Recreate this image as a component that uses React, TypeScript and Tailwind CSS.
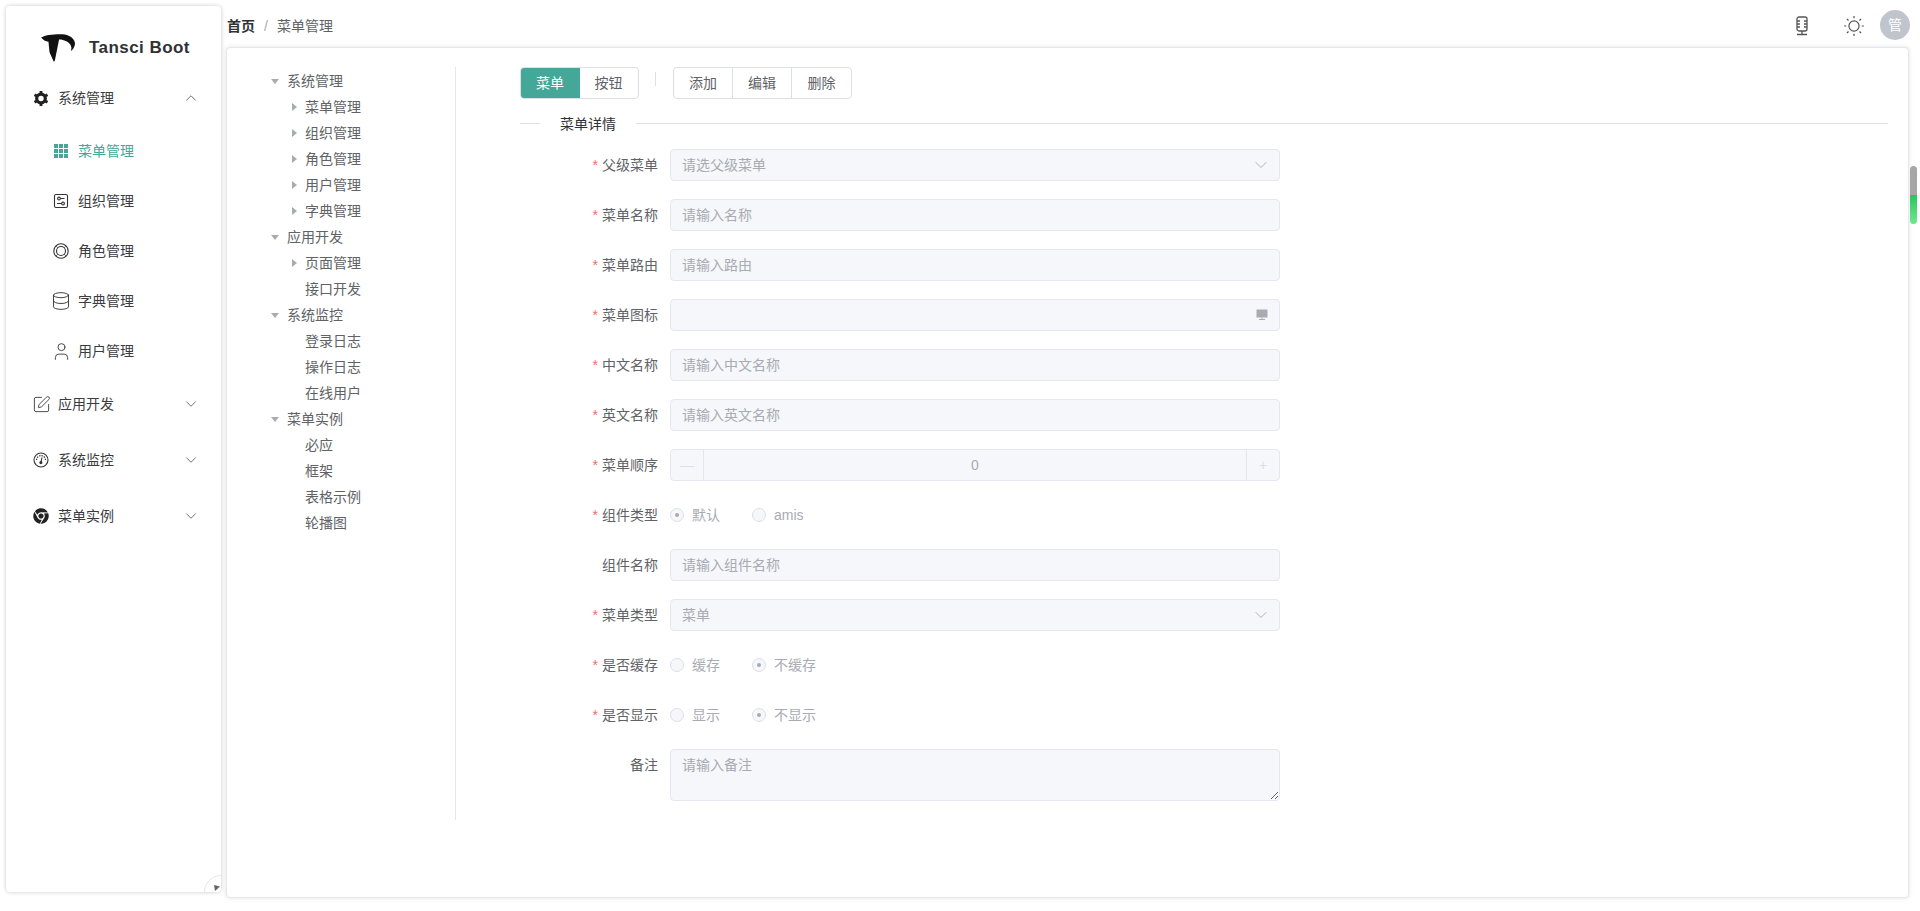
import type { ReactNode } from 'react';
import { ChevronDown, ChevronUp, Database, SquarePen, User } from 'lucide-react';
import { FaChrome } from 'react-icons/fa';

const subMenus = ['菜单管理', '组织管理', '角色管理', '字典管理', '用户管理'];

type TreeRow = { label: string; level: 1 | 2; arrow?: boolean };

const treeRows: TreeRow[] = [
  { label: '系统管理', level: 1, arrow: true },
  { label: '菜单管理', level: 2, arrow: true },
  { label: '组织管理', level: 2, arrow: true },
  { label: '角色管理', level: 2, arrow: true },
  { label: '用户管理', level: 2, arrow: true },
  { label: '字典管理', level: 2, arrow: true },
  { label: '应用开发', level: 1, arrow: true },
  { label: '页面管理', level: 2, arrow: true },
  { label: '接口开发', level: 2 },
  { label: '系统监控', level: 1, arrow: true },
  { label: '登录日志', level: 2 },
  { label: '操作日志', level: 2 },
  { label: '在线用户', level: 2 },
  { label: '菜单实例', level: 1, arrow: true },
  { label: '必应', level: 2 },
  { label: '框架', level: 2 },
  { label: '表格示例', level: 2 },
  { label: '轮播图', level: 2 },
];

function GearIcon() {
  return (
    <svg width="17" height="17" viewBox="0 0 17 17" fill="none" stroke="#222">
      <circle cx="8.500" cy="8.500" r="4.600" strokeWidth="3.400" />
      <path d="M8.500 0.500v3M8.500 13.500v3M1.600 4.500l2.600 1.500M12.800 11l2.600 1.500M1.600 12.500l2.600-1.500M12.800 6l2.600-1.500" strokeWidth="3" />
    </svg>
  );
}

function GridIcon() {
  return (
    <svg width="14" height="14" viewBox="0 0 14 14" fill="#45a797">
      {[0, 5, 10].map(y =>
        [0, 5, 10].map(x => <rect key={`${x}-${y}`} x={x} y={y} width="4" height="4" />),
      )}
    </svg>
  );
}

function SlidersIcon() {
  return (
    <svg width="16" height="16" viewBox="0 0 16 16" fill="none" stroke="#333" strokeWidth="1.100">
      <rect x="1.500" y="1.500" width="13" height="13" rx="1.500" />
      <circle cx="6" cy="5.500" r="1.400" />
      <path d="M7.500 5.500h4M4 10.500h4.500" />
      <circle cx="10" cy="10.500" r="1.400" />
    </svg>
  );
}

function RingIcon() {
  return (
    <svg width="16" height="16" viewBox="0 0 16 16" fill="none" stroke="#333" strokeWidth="1.100">
      <circle cx="8" cy="8" r="7.200" />
      <circle cx="8" cy="8" r="4.500" />
      <path d="M3 3l1.800 1.800M13 3l-1.800 1.800M3 13l1.800-1.800M13 13l-1.800-1.800" strokeWidth="0.700" />
    </svg>
  );
}

function GaugeIcon() {
  return (
    <svg width="16" height="16" viewBox="0 0 16 16" fill="none" stroke="#333" strokeWidth="1.100">
      <circle cx="8" cy="8" r="7" />
      <path d="M3.600 8a4.400 4.400 0 0 1 8.800 0" strokeDasharray="1.400 1" />
      <path d="M9 5.500 8 10" />
      <circle cx="7.900" cy="10.600" r="1" fill="#333" />
    </svg>
  );
}

function MicIcon() {
  return (
    <svg width="14" height="20" viewBox="0 0 14 20" fill="none" stroke="#555" strokeWidth="1.300">
      <rect x="2" y="1" width="10" height="14" rx="2" />
      <path d="M2 5h3M9 5h3M2 8h3M9 8h3M2 11h3M9 11h3M7 15v3M2 18.500h10" />
    </svg>
  );
}

function SunIcon() {
  return (
    <svg className="-mx-px" width="22" height="22" viewBox="0 0 20 20" fill="none" stroke="#555" strokeWidth="1.100">
      <circle cx="10" cy="10" r="4.600" />
      <path d="M10 1v2M10 17v2M1 10h2M17 10h2M3.600 3.600 5 5M15 15l1.400 1.400M3.600 16.400 5 15M15 5l1.400-1.400" />
    </svg>
  );
}

function Logo() {
  return (
    <svg width="36" height="30" viewBox="5 6 34 28">
      <path d="M6 10C12 7 20 7 26 7c7 0 13 5 12 10-1 3-2 5-4 6 2-4 0-9-9-11h-2l-4 20-1 1-4-9-1-10c-3 0-5-2-7-4z" fill="#111" />
    </svg>
  );
}

function MenuGroup({ icon, label, open }: { icon: ReactNode; label: string; open?: boolean }) {
  return (
    <div className="flex h-14 items-center pl-[27px] pr-[21px] text-sm text-[#3a3c40]">
      <span className="flex w-4 justify-center">{icon}</span>
      <span className="ml-[9px] flex-1">{label}</span>
      {open ? (
        <ChevronUp size={18} strokeWidth={1.100} color="#555" />
      ) : (
        <ChevronDown size={18} strokeWidth={1.100} color="#555" />
      )}
    </div>
  );
}

function SubMenu({ icon, label, active }: { icon: ReactNode; label: string; active?: boolean }) {
  return (
    <div className={`flex h-[50px] items-center pl-[47px] text-sm ${active ? 'text-[#45a797]' : 'text-[#3a3c40]'}`}>
      <span className="flex w-4 justify-center">{icon}</span>
      <span className="ml-[9px]">{label}</span>
    </div>
  );
}

function Sidebar() {
  const icons = [
    <GridIcon />,
    <SlidersIcon />,
    <RingIcon />,
    <Database className="shrink-0" size={20} strokeWidth={1.100} color="#333" />,
    <User className="shrink-0" size={21} strokeWidth={1} color="#333" />,
  ];
  return (
    <aside className="relative ml-[6px] mt-[6px] h-[886px] w-[215px] shrink-0 overflow-hidden rounded bg-white shadow-[0_0_4px_rgba(0,0,0,0.22)]">
      <div className="flex h-[64px] items-center pl-[34px] pt-[20px]">
        <Logo />
        <span className="ml-[13px] text-[17px] font-bold tracking-[0.45px] text-[#303133]">Tansci Boot</span>
      </div>
      <MenuGroup icon={<GearIcon />} label="系统管理" open />
      {subMenus.map((label, i) => (
        <SubMenu key={label} icon={icons[i]} label={label} active={i === 0} />
      ))}
      <MenuGroup icon={<SquarePen className="shrink-0" size={19} strokeWidth={1.100} color="#333" />} label="应用开发" />
      <MenuGroup icon={<GaugeIcon />} label="系统监控" />
      <MenuGroup icon={<FaChrome size={16} color="#222" />} label="菜单实例" />
      <div className="absolute -bottom-[17px] -right-[17px] h-[34px] w-[34px] rounded-full border border-[#e4e7ed] bg-white" />
      <svg className="absolute bottom-px right-px" width="6" height="6" viewBox="0 0 6 6" fill="#666">
        <path d="M0 0l6 1.500L1 6z" />
      </svg>
    </aside>
  );
}

function Tree() {
  return (
    <div className="w-[229px] shrink-0 border-r border-[#e4e7ed] pl-[43px] pt-[1px] text-sm text-[#606266]">
      {treeRows.map((row, i) => (
        <div key={i} className={`flex h-[26px] items-center ${row.level === 2 ? 'pl-[18px]' : ''}`}>
          <span className="flex w-[17px] shrink-0 items-center">
            {row.arrow &&
              (row.level === 1 ? (
                <span className="ml-[1px] h-0 w-0 border-x-[4.500px] border-t-[5px] border-x-transparent border-t-[#a8abb2]" />
              ) : (
                <span className="ml-[4px] h-0 w-0 border-y-[4.500px] border-l-[5px] border-y-transparent border-l-[#a8abb2]" />
              ))}
          </span>
          <span>{row.label}</span>
        </div>
      ))}
    </div>
  );
}

function Field({ label, required, tall, children }: { label: string; required?: boolean; tall?: boolean; children: ReactNode }) {
  return (
    <div className={`flex ${tall ? 'h-[52px]' : 'h-8'} mb-[18px]`}>
      <div className="flex h-8 w-[138px] items-center justify-end text-sm text-[#606266]">
        {required && <span className="mr-1 text-[#f56c6c]">*</span>}
        {label}
      </div>
      <div className="ml-3 w-[610px]">{children}</div>
    </div>
  );
}

function TextBox({ placeholder, children }: { placeholder?: string; children?: ReactNode }) {
  return (
    <div className="flex h-8 items-center justify-between rounded border border-[#e4e7ed] bg-[#f5f7fa] px-[11px] text-sm text-[#a8abb2]">
      <span>{placeholder}</span>
      {children}
    </div>
  );
}

function Radio({ label, checked }: { label: string; checked?: boolean }) {
  return (
    <div className="mr-[32px] flex h-8 items-center text-sm text-[#a8abb2]">
      <span className="flex h-[14px] w-[14px] items-center justify-center rounded-full border border-[#dcdfe6] bg-[#f5f7fa]">
        {checked && <span className="h-1 w-1 rounded-full bg-[#a8abb2]" />}
      </span>
      <span className="ml-2 min-w-[28px]">{label}</span>
    </div>
  );
}

function FormPanel() {
  return (
    <div className="flex-1 pl-[64px] pr-[20px]">
      <div className="flex items-start">
        <div className="flex h-8 overflow-hidden rounded border border-[#dcdfe6] text-sm text-[#606266]">
          <div className="-m-px flex w-[60px] items-center justify-center bg-[#45a797] text-white">菜单</div>
          <div className="flex w-[59px] items-center justify-center">按钮</div>
        </div>
        <div className="ml-4 mt-[5px] h-[14px] w-px bg-[#dcdfe6]" />
        <div className="ml-[17px] flex h-8 divide-x divide-[#dcdfe6] rounded border border-[#dcdfe6] text-sm text-[#606266]">
          {['添加', '编辑', '删除'].map(t => (
            <div key={t} className="flex w-[59px] items-center justify-center">{t}</div>
          ))}
        </div>
      </div>
      <div className="mb-[15px] mt-[14px] flex h-[21px] items-center text-sm text-[#303133]">
        <span className="h-px w-[20px] bg-[#dcdfe6]" />
        <span className="px-5">菜单详情</span>
        <span className="h-px flex-1 bg-[#dcdfe6]" />
      </div>
      <Field label="父级菜单" required>
        <TextBox placeholder="请选父级菜单"><ChevronDown className="-mr-[3px]" size={20} strokeWidth={1.100} color="#a8abb2" /></TextBox>
      </Field>
      <Field label="菜单名称" required><TextBox placeholder="请输入名称" /></Field>
      <Field label="菜单路由" required><TextBox placeholder="请输入路由" /></Field>
      <Field label="菜单图标" required>
        <TextBox>
          <svg width="12" height="12" viewBox="0 0 12 12" fill="#a8abb2">
            <rect x="0.500" y="0.500" width="11" height="8" />
            <rect x="3" y="10" width="6" height="1" />
            <rect x="5.500" y="8.500" width="1" height="2" />
          </svg>
        </TextBox>
      </Field>
      <Field label="中文名称" required><TextBox placeholder="请输入中文名称" /></Field>
      <Field label="英文名称" required><TextBox placeholder="请输入英文名称" /></Field>
      <Field label="菜单顺序" required>
        <div className="flex h-8 items-center rounded border border-[#e4e7ed] bg-[#f5f7fa] text-sm text-[#a8abb2]">
          <span className="flex h-full w-[33px] items-center justify-center border-r border-[#e4e7ed] text-[#dcdfe6]">—</span>
          <span className="flex-1 text-center">0</span>
          <span className="flex h-full w-[33px] items-center justify-center border-l border-[#e4e7ed] text-[#dcdfe6]">+</span>
        </div>
      </Field>
      <Field label="组件类型" required>
        <div className="flex"><Radio label="默认" checked /><Radio label="amis" /></div>
      </Field>
      <Field label="组件名称"><TextBox placeholder="请输入组件名称" /></Field>
      <Field label="菜单类型" required>
        <TextBox placeholder="菜单"><ChevronDown className="-mr-[3px]" size={20} strokeWidth={1.100} color="#a8abb2" /></TextBox>
      </Field>
      <Field label="是否缓存" required>
        <div className="flex"><Radio label="缓存" /><Radio label="不缓存" checked /></div>
      </Field>
      <Field label="是否显示" required>
        <div className="flex"><Radio label="显示" /><Radio label="不显示" checked /></div>
      </Field>
      <Field label="备注" tall>
        <textarea
          disabled
          rows={2}
          placeholder="请输入备注"
          className="block h-[52px] w-full rounded border border-[#e4e7ed] bg-[#f5f7fa] px-[11px] py-[5px] text-sm placeholder:text-[#a8abb2]"
        />
      </Field>
    </div>
  );
}

export default function App() {
  return (
    <div className="relative flex h-[911px] overflow-hidden bg-white font-['Liberation_Sans','Noto_Sans_CJK_SC',sans-serif]">
      <Sidebar />
      <div className="ml-[5px] flex w-[1683px] shrink-0 flex-col">
        <header className="flex h-[47px] shrink-0 items-center justify-between pl-px pt-[3px] text-sm text-[#606266]">
          <div className="mt-[2px] flex items-center">
            <span className="font-bold text-[#303133]">首页</span>
            <span className="mx-[9px] text-[#a8abb2]">/</span>
            <span>菜单管理</span>
          </div>
          <div className="relative left-[1px] flex items-center">
            <span className="mt-[2px]"><MicIcon /></span>
            <span className="ml-[35px] mr-[16px] mt-[2px]"><SunIcon /></span>
            <span className="flex h-[30px] w-[30px] items-center justify-center rounded-full bg-[#c0c4cc] text-sm text-white">管</span>
          </div>
        </header>
        <main className="mb-[13px] flex flex-1 rounded border border-[#e4e7ed] bg-white pt-[19px] shadow-[0_0_4px_rgba(0,0,0,0.12)]">
          <div className="flex h-[753px] w-full">
            <Tree />
            <FormPanel />
          </div>
        </main>
      </div>
      <div className="absolute left-[1910px] top-[166px] h-[58px] w-[7px] overflow-hidden rounded-full">
        <div className="h-[29px] bg-[#a6a6a6]" />
        <div className="h-[29px] bg-gradient-to-b from-[#22c55e] to-[#6ee78f]" />
      </div>
    </div>
  );
}
